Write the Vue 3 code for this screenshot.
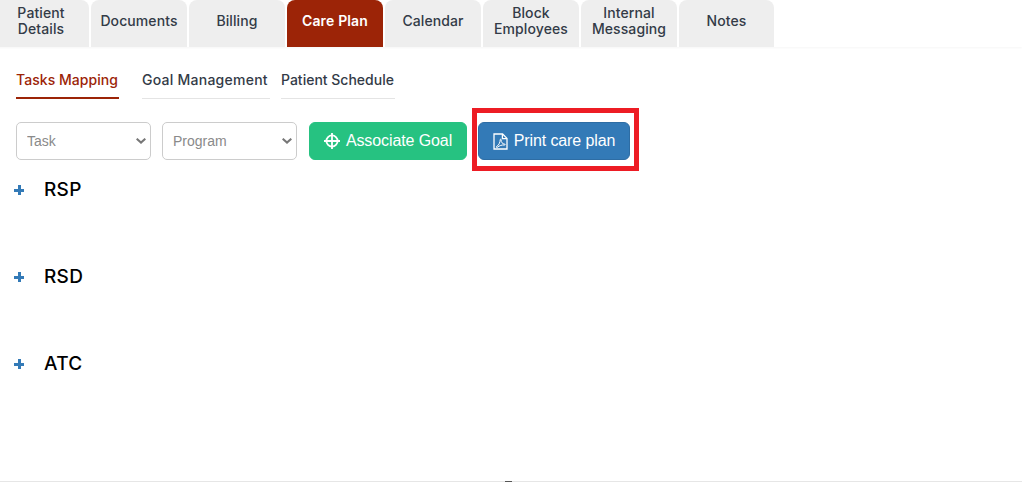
<template>
  <div class="page">

    <nav class="main-tabs">
      <a
        v-for="tab in tabs"
        :key="tab"
        class="main-tab"
        :class="{ active: tab === 'Care Plan' }"
      >
        {{ tab }}
      </a>
    </nav>

    <div class="sub-tabs">
      <a
        v-for="tab in subTabs"
        :key="tab"
        class="sub-tab"
        :class="{ active: tab === 'Tasks Mapping' }"
      >
        {{ tab }}
      </a>
    </div>

    <div class="toolbar">
      <div class="filter-wrap">
        <select class="filter">
          <option>Task</option>
        </select>
        <svg class="chevron" width="10" height="6" viewBox="0 0 10 6" fill="none" stroke="#777" stroke-width="2">
          <path d="M.7.700L5 4.600 9.300.700" />
        </svg>
      </div>
      <div class="filter-wrap">
        <select class="filter">
          <option>Program</option>
        </select>
        <svg class="chevron" width="10" height="6" viewBox="0 0 10 6" fill="none" stroke="#777" stroke-width="2">
          <path d="M.7.700L5 4.600 9.300.700" />
        </svg>
      </div>

      <button class="btn btn-green">
        <svg width="16" height="16" viewBox="0 0 16 16" fill="none" stroke="#fff" stroke-width="1.8">
          <circle cx="8" cy="8" r="5.600" />
          <path d="M8 0v16M0 8h16" />
        </svg>
        Associate Goal
      </button>

      <div class="print-wrap">
        <button class="btn btn-blue">
          <svg width="15" height="17" viewBox="0 0 15 17" fill="none" stroke="#fff" stroke-width="1.3">
            <path d="M1 1h8.600l4.400 4.400V16H1z" />
            <path d="M9.400 1v4.600H14" />
            <path d="M3.400 13.600c2.200-1 3.800-4.200 3.800-6.800 0-1 1-.8.900.2-.2 2.200 1.500 3.900 3.500 4.100 1 .1.800 1-.2.900-2.500-.2-5 .5-7 2.400-.6.500-1.400 0-1-.8z" stroke-width="1" />
          </svg>
          Print care plan
        </button>
        <div class="highlight"></div>
      </div>
    </div>

    <div class="groups">
      <div v-for="group in groups" :key="group" class="group">
        <span class="plus"></span>
        <span class="group-name">{{ group }}</span>
      </div>
    </div>

    <div class="bottom-line">
      <span class="bottom-mark"></span>
    </div>

  </div>
</template>

<script setup>
const tabs = [
  "Patient Details",
  "Documents",
  "Billing",
  "Care Plan",
  "Calendar",
  "Block Employees",
  "Internal Messaging",
  "Notes"
]

const subTabs = ["Tasks Mapping", "Goal Management", "Patient Schedule"]

const groups = ["RSP", "RSD", "ATC"]
</script>

<style>
html, body {
  margin: 0;
  background: #fff;
  overflow: hidden;
}
</style>

<style scoped>
.page {
  height: 482px;
  box-sizing: border-box;
  font-family: "Inter", "Liberation Sans", sans-serif;
  overflow: hidden;
  display: flex;
  flex-direction: column;
}

.main-tabs {
  display: flex;
  gap: 2px;
  height: 47px;
  margin-left: -7px;
  flex-shrink: 0;
  box-shadow: 0 1px 2px rgba(0, 0, 0, .04);
}

.main-tab {
  width: 96px;
  box-sizing: border-box;
  display: flex;
  align-items: center;
  justify-content: center;
  padding: 0 8px 5px;
  text-align: center;
  background: #eee;
  border-radius: 8px 8px 0 0;
  font-size: 14px;
  line-height: 16px;
  font-weight: 500;
  letter-spacing: .1px;
  color: #333b47;
}

.main-tab:last-child {
  width: 95px;
}

.main-tab.active {
  background: #9c2407;
  color: #fff;
  font-weight: 600;
  letter-spacing: .15px;
}

.sub-tabs {
  display: flex;
  margin: 20px 0 0 16px;
  height: 32px;
  flex-shrink: 0;
}

.sub-tab {
  box-sizing: border-box;
  height: 32px;
  width: 128px;
  margin-right: 11px;
  font-size: 14px;
  font-weight: 500;
  letter-spacing: .25px;
  line-height: 25px;
  color: #333b47;
  border-bottom: 1px solid #e4e4e4;
  white-space: nowrap;
}

.sub-tab:first-child {
  width: 103px;
  margin-right: 23px;
  letter-spacing: .05px;
}

.sub-tab:last-child {
  width: 114px;
  margin-right: 0;
  letter-spacing: 0;
}

.sub-tab.active {
  color: #9c2407;
  border-bottom: 2px solid #9c2407;
}

.toolbar {
  display: flex;
  align-items: center;
  margin: 23px 0 0 16px;
  flex-shrink: 0;
}

.filter-wrap {
  position: relative;
  margin-right: 11px;
}

.filter-wrap + .filter-wrap {
  margin-right: 12px;
}

.filter {
  display: block;
  appearance: none;
  width: 135px;
  height: 38px;
  box-sizing: border-box;
  padding: 6px 10px;
  border: 1px solid #ccc;
  border-radius: 5px;
  background: #fff;
  color: #8a8a8a;
  font-family: "Liberation Sans", Arial, sans-serif;
  font-size: 14px;
}

.chevron {
  position: absolute;
  right: 5px;
  top: 16px;
  pointer-events: none;
}

.btn {
  display: flex;
  align-items: center;
  justify-content: center;
  gap: 6px;
  height: 38px;
  box-sizing: border-box;
  border-radius: 6px;
  color: #fff;
  font-family: "Liberation Sans", Arial, sans-serif;
  font-size: 16px;
  letter-spacing: -.1px;
  padding: 0;
}

.btn-green {
  width: 158px;
  background: #26c281;
  border: 1px solid #26c281;
  margin-right: 11px;
}

.btn-blue {
  width: 152px;
  background: #337ab7;
  border: 1px solid #2e6da4;
}

.print-wrap {
  position: relative;
}

.highlight {
  position: absolute;
  left: -6px;
  right: -9px;
  top: -14px;
  bottom: -11px;
  border: 5px solid #ed1c24;
  pointer-events: none;
}

.groups {
  margin-top: 18px;
  padding-left: 14px;
}

.group {
  display: flex;
  align-items: center;
  height: 22px;
  margin-bottom: 65px;
}

.plus {
  width: 10px;
  height: 10px;
  margin-right: 20px;
  margin-top: 2px;
  background:
    linear-gradient(#337ab7, #337ab7) center / 10px 3px no-repeat,
    linear-gradient(#337ab7, #337ab7) center / 3px 10px no-repeat;
}

.group-name {
  font-size: 19px;
  font-weight: 500;
  color: #000;
  letter-spacing: .3px;
}

.bottom-line {
  margin-top: auto;
  height: 1px;
  background: #e6e6e6;
  position: relative;
  flex-shrink: 0;
}

.bottom-mark {
  position: absolute;
  left: 505px;
  top: 0;
  width: 7px;
  height: 1px;
  background: #555;
}
</style>
